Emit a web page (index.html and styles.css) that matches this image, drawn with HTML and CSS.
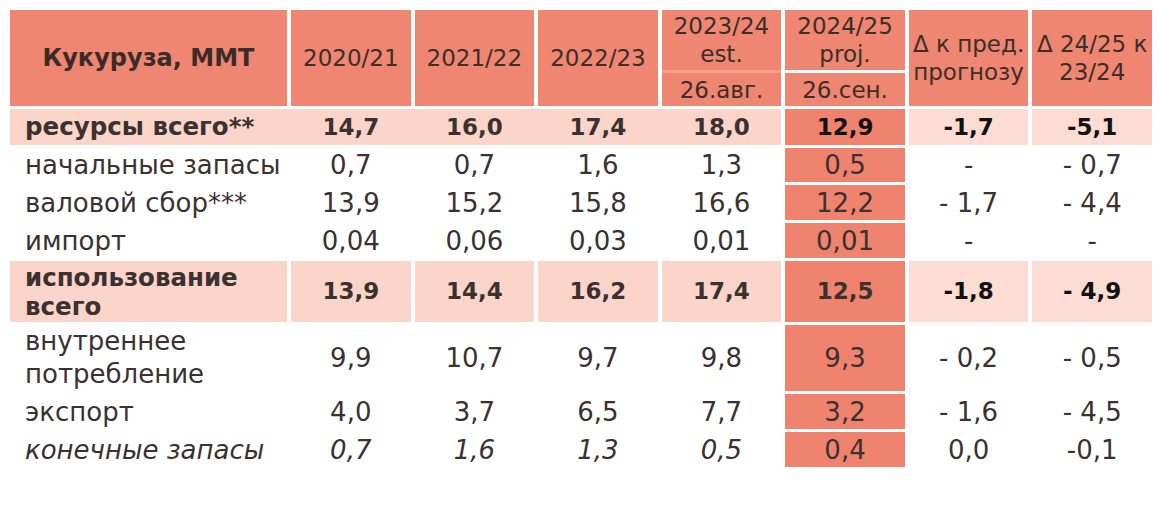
FILE: index.html
```html
<!DOCTYPE html>
<html lang="ru">
<head>
<meta charset="utf-8">
<title>Кукуруза, ММТ</title>
<link rel="stylesheet" href="styles.css">
</head>
<body>
<div class="wrap">
<table class="grid">
  <colgroup>
    <col class="c-name">
    <col><col><col><col><col><col><col>
  </colgroup>
  <thead>
    <tr class="h1">
      <th rowspan="2" class="title">Кукуруза, ММТ</th>
      <th rowspan="2">2020/21</th>
      <th rowspan="2">2021/22</th>
      <th rowspan="2">2022/23</th>
      <th class="two">2023/24<br>est.</th>
      <th class="two">2024/25<br>proj.</th>
      <th rowspan="2" class="two">Δ к пред.<br>прогнозу</th>
      <th rowspan="2" class="two">Δ 24/25 к<br>23/24</th>
    </tr>
    <tr class="h2">
      <th class="soft">26.авг.</th>
      <th>26.сен.</th>
    </tr>
  </thead>
  <tbody>
    <tr class="r-total r-res">
      <td class="name join">ресурсы всего**</td>
      <td class="join">14,7</td>
      <td class="join">16,0</td>
      <td class="join">17,4</td>
      <td>18,0</td>
      <td class="hl black">12,9</td>
      <td class="lite black">-1,7</td>
      <td class="lite black">-5,1</td>
    </tr>
    <tr class="r-s">
      <td class="name">начальные запасы</td>
      <td>0,7</td><td>0,7</td><td>1,6</td><td>1,3</td>
      <td class="hl">0,5</td><td>-</td><td>- 0,7</td>
    </tr>
    <tr class="r-m">
      <td class="name">валовой сбор***</td>
      <td>13,9</td><td>15,2</td><td>15,8</td><td>16,6</td>
      <td class="hl">12,2</td><td>- 1,7</td><td>- 4,4</td>
    </tr>
    <tr class="r-m">
      <td class="name">импорт</td>
      <td>0,04</td><td>0,06</td><td>0,03</td><td>0,01</td>
      <td class="hl">0,01</td><td>-</td><td>-</td>
    </tr>
    <tr class="r-total r-use">
      <td class="name">использование<br>всего</td>
      <td>13,9</td><td>14,4</td><td>16,2</td><td>17,4</td>
      <td class="hl">12,5</td>
      <td class="lite black">-1,8</td>
      <td class="lite black">- 4,9</td>
    </tr>
    <tr class="r-dom">
      <td class="name">внутреннее<br>потребление</td>
      <td>9,9</td><td>10,7</td><td>9,7</td><td>9,8</td>
      <td class="hl">9,3</td><td>- 0,2</td><td>- 0,5</td>
    </tr>
    <tr class="r-m">
      <td class="name">экспорт</td>
      <td>4,0</td><td>3,7</td><td>6,5</td><td>7,7</td>
      <td class="hl">3,2</td><td>- 1,6</td><td>- 4,5</td>
    </tr>
    <tr class="r-m r-end">
      <td class="name it">конечные запасы</td>
      <td class="it">0,7</td><td class="it">1,6</td><td class="it">1,3</td><td class="it">0,5</td>
      <td class="hl">0,4</td><td>0,0</td><td>-0,1</td>
    </tr>
  </tbody>
</table>
</div>
</body>
</html>
```

FILE: styles.css
```css
html, body {
  margin: 0;
  padding: 0;
  background: #ffffff;
}

body {
  font-family: "DejaVu Sans", "Noto Sans", sans-serif;
  color: #3a3130;
}

.wrap {
  padding: 7px 0 0 6px;
}

.grid {
  border-collapse: separate;
  border-spacing: 4px 3px;
  table-layout: fixed;
  width: 1150px;
}

.c-name {
  width: 277px;
}

.grid th {
  background: #ee8671;
  font-weight: normal;
  font-size: 23px;
  line-height: 28px;
  color: #3d2e2a;
  padding: 0;
  text-align: center;
  vertical-align: middle;
}

.grid th.title {
  font-weight: bold;
  font-size: 24px;
  color: #3a2c29;
}

.h1 th {
  height: 60px;
}

.h2 th {
  height: 33px;
}

.h2 th.soft {
  box-shadow: 0 -3px 0 #f3a08e;
}

.grid td {
  padding: 0;
  text-align: center;
  vertical-align: middle;
  font-size: 26px;
  line-height: 30px;
  white-space: nowrap;
}

.grid td.name {
  text-align: left;
  padding-left: 15px;
}

.r-total td {
  font-weight: bold;
  font-size: 23px;
  background: #fbd4ca;
}

.r-total td.name {
  font-size: 24.5px;
}

.r-res td {
  height: 36px;
}

.r-res td.join {
  box-shadow: 4px 0 0 #fbd4ca;
}

.r-use td {
  height: 61px;
  line-height: 29px;
}

.r-s td {
  height: 34px;
}

.r-m td {
  height: 35px;
}

.r-dom td {
  height: 63px;
  line-height: 33px;
}

.grid td.hl {
  background: #ef836d;
}

.grid td.lite {
  background: #fcdcd3;
}

.grid td.black {
  color: #111111;
}

.grid td.it {
  font-style: italic;
}
```
